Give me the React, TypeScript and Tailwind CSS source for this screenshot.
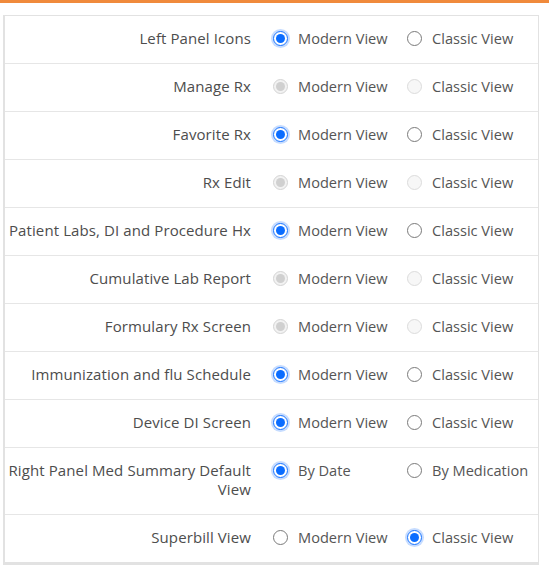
import React from 'react';

type Opt = { label: string; state: 'on' | 'off' | 'dis-on' | 'dis-off' };
type Row = { label: string; options: [Opt, Opt] };

const mv = (s: Opt['state']): Opt => ({ label: 'Modern View', state: s });
const cv = (s: Opt['state']): Opt => ({ label: 'Classic View', state: s });

const rows: Row[] = [
  { label: 'Left Panel Icons', options: [mv('on'), cv('off')] },
  { label: 'Manage Rx', options: [mv('dis-on'), cv('dis-off')] },
  { label: 'Favorite Rx', options: [mv('on'), cv('off')] },
  { label: 'Rx Edit', options: [mv('dis-on'), cv('dis-off')] },
  { label: 'Patient Labs, DI and Procedure Hx', options: [mv('on'), cv('off')] },
  { label: 'Cumulative Lab Report', options: [mv('dis-on'), cv('dis-off')] },
  { label: 'Formulary Rx Screen', options: [mv('dis-on'), cv('dis-off')] },
  { label: 'Immunization and flu Schedule', options: [mv('on'), cv('off')] },
  { label: 'Device DI Screen', options: [mv('on'), cv('off')] },
  {
    label: 'Right Panel Med Summary Default View',
    options: [
      { label: 'By Date', state: 'on' },
      { label: 'By Medication', state: 'off' },
    ],
  },
  { label: 'Superbill View', options: [mv('off'), cv('on')] },
];

function Radio({ state }: { state: Opt['state'] }) {
  if (state === 'on') {
    return (
      <span className="w-[15px] h-[15px] rounded-full border-[1.5px] border-[#1a75ff] bg-white flex items-center justify-center shadow-[0_0_0_2px_rgba(26,117,255,0.25)] shrink-0">
        <span className="w-[9px] h-[9px] rounded-full bg-[#0b6dff]" />
      </span>
    );
  }
  if (state === 'dis-on') {
    return (
      <span className="w-[15px] h-[15px] rounded-full border border-[#d4d4d4] bg-[#f2f2f2] flex items-center justify-center shrink-0">
        <span className="w-[9px] h-[9px] rounded-full bg-[#d0d0d0]" />
      </span>
    );
  }
  if (state === 'dis-off') {
    return <span className="w-[15px] h-[15px] rounded-full border border-[#dcdcdc] bg-[#f7f7f7] shrink-0" />;
  }
  return <span className="w-[15px] h-[15px] rounded-full border border-[#7a7a7a] bg-white shrink-0" />;
}

export default function App() {
  return (
    <div className="w-[549px] h-[575px] bg-white font-['Open_Sans',sans-serif] text-[14px]">
      <div className="h-[3px] bg-[#f08a3c]" />
      <div className="mt-[12px] ml-[3px] w-[536px] border border-[#e2e2e2] border-l-2 border-b-[3px]">
        {rows.map((r, i) => (
          <div
            key={r.label}
            className={`flex pt-[13px] pb-[15px] leading-[19px] ${i > 0 ? 'border-t border-[#e6e6e6]' : ''}`}
          >
            <div className="w-[246px] shrink-0 text-right text-[#4d4d4d] text-[15px] tracking-[0.1px]">{r.label}</div>
            <div className="flex ml-[22px]">
              {r.options.map((o) => (
                <label key={o.label} className="w-[134px] flex items-start gap-[10px] text-[#555] text-[14.6px]">
                  <span className="h-[19px] flex items-center">
                    <Radio state={o.state} />
                  </span>
                  <span>{o.label}</span>
                </label>
              ))}
            </div>
          </div>
        ))}
      </div>
    </div>
  );
}
